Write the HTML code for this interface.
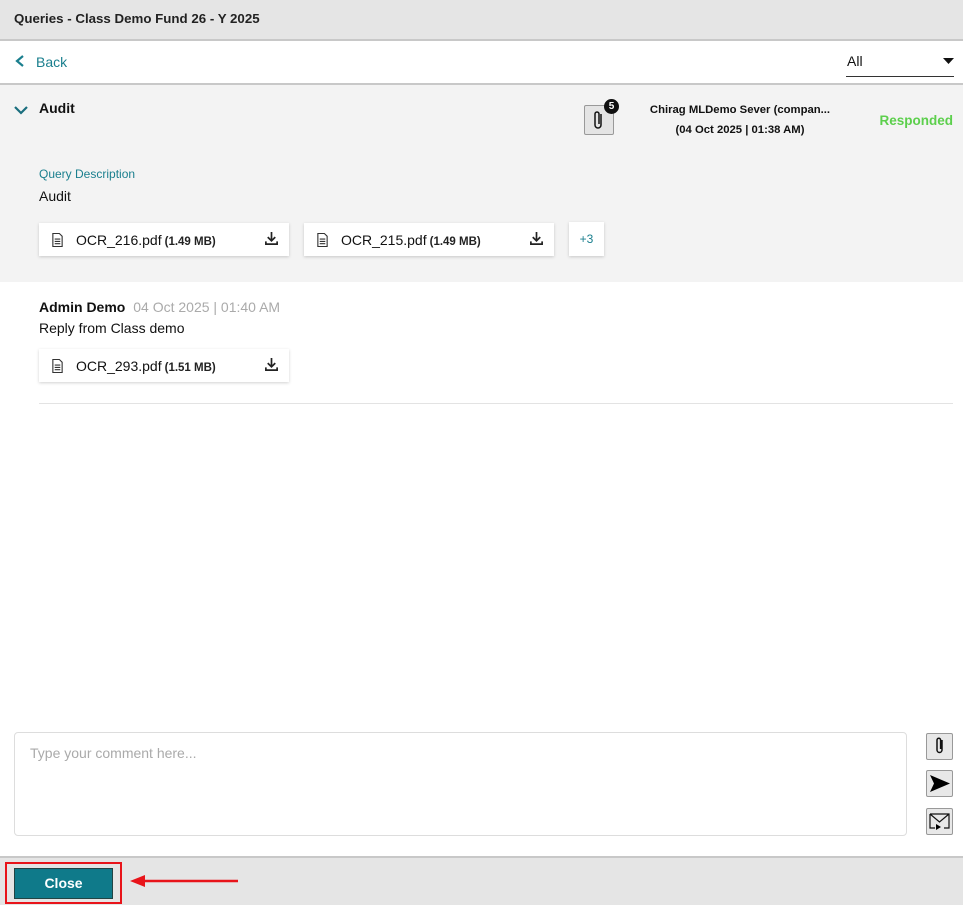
<!DOCTYPE html>
<html><head><meta charset="utf-8"><style>
*{box-sizing:border-box;margin:0;padding:0}
body{width:963px;height:905px;position:relative;font-family:"Liberation Sans",Arial,sans-serif;background:#fff;color:#111;overflow:hidden}
.a{position:absolute}
.card{position:absolute;background:#fff;box-shadow:0 1px 3px rgba(0,0,0,.18);height:33px;font-size:14px}
.card .n{position:absolute;left:37px;top:9px}
.card .s{font-size:11.5px;font-weight:bold;color:#222;margin-left:3px}
.ib{position:absolute;width:27px;height:27px;border:1px solid #999;border-radius:2px;background:#e8e8e8}
</style></head><body>
<div class="a" style="left:0;top:0;width:963px;height:39px;background:#e5e5e5"></div>
<div class="a" style="left:0;top:39px;width:963px;height:2px;background:#c8c8c8"></div>
<div class="a" style="left:14px;top:11px;font-size:13.3px;font-weight:bold;color:#222">Queries - Class Demo Fund 26 - Y 2025</div>
<svg class="a" style="left:14px;top:54px" width="12" height="14"><path d="M9 2L3 7l6 5" stroke="#1a7f8e" stroke-width="2.2" fill="none"/></svg>
<div class="a" style="left:36px;top:54px;font-size:14px;color:#1a7f8e">Back</div>
<div class="a" style="left:847px;top:53px;font-size:14px">All</div>
<div class="a" style="left:846px;top:76px;width:108px;height:1px;background:#333"></div>
<svg class="a" style="left:943px;top:58px" width="12" height="8"><path d="M0 0h11L5.5 6z" fill="#111"/></svg>
<div class="a" style="left:0;top:83px;width:963px;height:2px;background:#c8c8c8"></div>
<div class="a" style="left:0;top:85px;width:963px;height:197px;background:#f3f3f3"></div>
<svg class="a" style="left:13px;top:104px" width="16" height="12"><path d="M2 3l6 6 6-6" stroke="#1a6e7e" stroke-width="2.2" fill="none"/></svg>
<div class="a" style="left:39px;top:100px;font-size:14px;font-weight:bold">Audit</div>
<div class="ib" style="left:584px;top:105px;width:30px;height:30px;background:#e4e4e4"><svg width="28" height="28"><path d="M16 8v11a3 3 0 0 1-6 0V8a2 2 0 0 1 4 0v10" stroke="#111" stroke-width="1.5" fill="none"/></svg></div>
<div class="a" style="left:604px;top:99px;width:15px;height:15px;border-radius:50%;background:#111;color:#fff;font-size:10px;font-weight:bold;text-align:center;line-height:15px">5</div>
<div class="a" style="left:640px;top:100px;width:200px;text-align:center;font-size:11.3px;font-weight:bold;line-height:20px">Chirag MLDemo Sever (compan...<br>(04 Oct 2025 | 01:38 AM)</div>
<div class="a" style="right:10px;top:113px;font-size:13.5px;font-weight:bold;color:#5ccf4c">Responded</div>
<div class="a" style="left:39px;top:167px;font-size:12px;color:#1a7f8e">Query Description</div>
<div class="a" style="left:39px;top:188px;font-size:14px">Audit</div>
<svg width="0" height="0" style="position:absolute"><defs>
<symbol id="doc" viewBox="0 0 14 16"><path d="M2 1h7l3 3v11H2z M4 7h6M4 9.5h6M4 12h6" stroke="#333" stroke-width="1.2" fill="none"/></symbol>
<symbol id="dl" viewBox="0 0 16 16"><path d="M8 1v9M4 6.5l4 4 4-4M2 11v3h12v-3" stroke="#222" stroke-width="1.8" fill="none"/></symbol></defs></svg>
<div class="card" style="left:39px;top:223px;width:250px"><svg class="a" style="left:12px;top:9px" width="13" height="16"><use href="#doc"/></svg><span class="n">OCR_216.pdf<span class="s">(1.49 MB)</span></span><svg class="a" style="left:225px;top:8px" width="15" height="15"><use href="#dl"/></svg></div>
<div class="card" style="left:304px;top:223px;width:250px"><svg class="a" style="left:12px;top:9px" width="13" height="16"><use href="#doc"/></svg><span class="n">OCR_215.pdf<span class="s">(1.49 MB)</span></span><svg class="a" style="left:225px;top:8px" width="15" height="15"><use href="#dl"/></svg></div>
<div class="card" style="left:569px;top:222px;width:35px;height:34px;font-size:12px;color:#1a7f8e;text-align:center;line-height:34px">+3</div>
<div class="a" style="left:39px;top:299px;font-size:14px"><b>Admin Demo</b> <span style="color:#aaa;margin-left:4px">04 Oct 2025 | 01:40 AM</span></div>
<div class="a" style="left:39px;top:320px;font-size:14px">Reply from Class demo</div>
<div class="card" style="left:39px;top:349px;width:250px"><svg class="a" style="left:12px;top:9px" width="13" height="16"><use href="#doc"/></svg><span class="n">OCR_293.pdf<span class="s">(1.51 MB)</span></span><svg class="a" style="left:225px;top:8px" width="15" height="15"><use href="#dl"/></svg></div>
<div class="a" style="left:39px;top:403px;width:914px;height:1px;background:#e3e3e3"></div>
<div class="a" style="left:14px;top:732px;width:893px;height:104px;border:1px solid #ddd;border-radius:4px"></div>
<div class="a" style="left:30px;top:745px;font-size:14px;color:#aaa">Type your comment here...</div>
<div class="ib" style="left:926px;top:733px"><svg width="25" height="25"><path d="M15 6v10a2.5 2.5 0 0 1-5 0V6a1.8 1.8 0 0 1 3.6 0v9" stroke="#111" stroke-width="1.5" fill="none"/></svg></div>
<div class="ib" style="left:926px;top:770px"><svg width="25" height="25"><path d="M3 4l20 8.5L3 21l4-8.5z" fill="#000"/></svg></div>
<div class="ib" style="left:926px;top:808px"><svg width="25" height="25"><path d="M3 5h19v14h-5M3 5v14h5M3 5l9.5 8L22 5" stroke="#111" stroke-width="1.2" fill="none"/><path d="M9 15l5 3-5 3z" fill="#000"/></svg></div>
<div class="a" style="left:0;top:856px;width:963px;height:2px;background:#c8c8c8"></div>
<div class="a" style="left:0;top:858px;width:963px;height:47px;background:#e5e5e5"></div>
<div class="a" style="left:5px;top:862px;width:117px;height:42px;border:2px solid #e8141a"></div>
<div class="a" style="left:14px;top:868px;width:99px;height:31px;background:#0f7a8a;border:1px solid #244;color:#fff;font-size:14px;font-weight:bold;text-align:center;line-height:29px">Close</div>
<svg class="a" style="left:128px;top:873px" width="112" height="16"><path d="M14 8H110" stroke="#e8141a" stroke-width="2.5"/><path d="M2 8l15-6v12z" fill="#e8141a"/></svg>
</body></html>
